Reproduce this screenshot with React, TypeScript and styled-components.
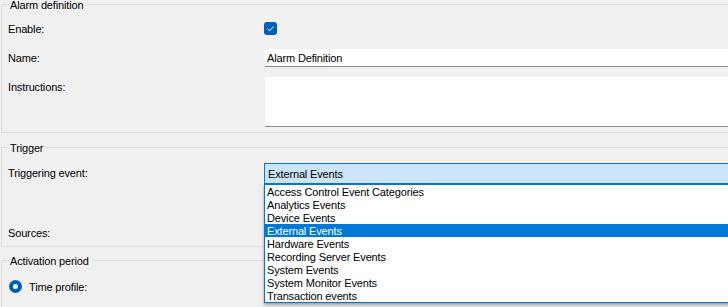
import React from "react";
import styled, { createGlobalStyle } from "styled-components";

const GlobalStyle = createGlobalStyle`
  html, body {
    margin: 0;
    padding: 0;
    background: #f0f0f0;
    overflow: hidden;
  }
  body {
    font-family: "Liberation Sans", Arial, sans-serif;
    font-size: 11px;
    letter-spacing: -0.15px;
    color: #000;
  }
`;

const Page = styled.div`
  width: 780px;
  height: 320px;
  padding-left: 1px;
  margin-top: -2px;
  display: flex;
  flex-direction: column;
`;

const Group = styled.section<{ $mt: number }>`
  margin-top: ${(p) => p.$mt}px;
  display: flex;
  flex-direction: column;
`;

const GroupHeader = styled.div`
  display: flex;
  height: 13px;
`;

const HeaderCorner = styled.span`
  align-self: flex-end;
  width: 5px;
  height: 6px;
  border-top: 1px solid #dcdcdc;
  border-left: 1px solid #dcdcdc;
`;

const HeaderTitle = styled.span`
  padding: 1px 3px 0 3px;
  line-height: 12px;
  white-space: nowrap;
`;

const HeaderRule = styled.span`
  flex: 1;
  align-self: flex-start;
  margin-top: 6px;
  height: 1px;
  background: #dcdcdc;
`;

const GroupBody = styled.div<{ $pt: number; $pb: number }>`
  border-left: 1px solid #dcdcdc;
  border-bottom: 1px solid #dcdcdc;
  padding: ${(p) => p.$pt}px 0 ${(p) => p.$pb}px 6px;
  display: flex;
  flex-direction: column;
`;

const Row = styled.div<{ $mt?: number; $top?: boolean }>`
  display: grid;
  grid-template-columns: 256px 1fr;
  align-items: ${(p) => (p.$top ? "start" : "center")};
  margin-top: ${(p) => p.$mt ?? 0}px;
`;

const Label = styled.span<{ $pt?: number }>`
  height: 13px;
  box-sizing: border-box;
  line-height: ${(p) => 13 - Math.min(p.$pt ?? 0, 1)}px;
  padding-top: ${(p) => p.$pt ?? 0}px;
  white-space: nowrap;
`;

const CheckBox = styled.span`
  width: 13px;
  height: 13px;
  border-radius: 3px;
  background: #005fb8;
  display: flex;
  align-items: center;
  justify-content: center;
`;

const TextBox = styled.div<{ $h: number }>`
  margin-left: 1px;
  height: ${(p) => p.$h}px;
  box-sizing: border-box;
  background: #fff;
  border-bottom: 1px solid #8a8a8a;
  padding: 3px 0 0 2px;
  line-height: 13px;
  white-space: nowrap;
`;

const ComboWrap = styled.div`
  position: relative;
`;

const Combo = styled.div`
  height: 21px;
  box-sizing: border-box;
  border: 1px solid #0078d7;
  background: #cce4f7;
  padding: 1px 0 0 3px;
  display: flex;
  align-items: center;
  white-space: nowrap;
`;

const DropList = styled.ul`
  position: absolute;
  top: 100%;
  left: 0;
  right: 0;
  margin: 0;
  padding: 0;
  list-style: none;
  background: #fff;
  border: 1px solid #0078d7;
  box-shadow: 0 2px 3px rgba(0, 0, 0, 0.35);
  z-index: 2;
`;

const DropItem = styled.li<{ $selected?: boolean }>`
  height: 12px;
  line-height: 13px;
  padding: 1px 0 0 2px;
  white-space: nowrap;
  background: ${(p) => (p.$selected ? "#0078d7" : "transparent")};
  color: ${(p) => (p.$selected ? "#fff" : "#000")};
`;

const RadioRow = styled.div<{ $mt?: number }>`
  display: flex;
  align-items: center;
  gap: 7px;
  margin-left: 1px;
  margin-top: ${(p) => p.$mt ?? 0}px;
`;

const Radio = styled.span`
  width: 13px;
  height: 13px;
  box-sizing: border-box;
  border-radius: 50%;
  background: #005fb8;
  display: flex;
  align-items: center;
  justify-content: center;
`;

const RadioDot = styled.span`
  width: 5px;
  height: 5px;
  border-radius: 50%;
  background: #fff;
`;

const events = [
  "Access Control Event Categories",
  "Analytics Events",
  "Device Events",
  "External Events",
  "Hardware Events",
  "Recording Server Events",
  "System Events",
  "System Monitor Events",
  "Transaction events",
];

function GroupTitle({ title }: { title: string }) {
  return (
    <GroupHeader>
      <HeaderCorner />
      <HeaderTitle>{title}</HeaderTitle>
      <HeaderRule />
    </GroupHeader>
  );
}

export default function App() {
  return (
    <>
      <GlobalStyle />
      <Page>
        <Group $mt={0}>
          <GroupTitle title="Alarm definition" />
          <GroupBody $pt={11} $pb={5}>
            <Row>
              <Label $pt={1}>Enable:</Label>
              <CheckBox>
                <svg width="9" height="9" viewBox="0 0 9 9">
                  <path
                    d="M1.5 4.8 L3.6 6.8 L7.6 2.4"
                    fill="none"
                    stroke="#fff"
                    strokeWidth="1"
                  />
                </svg>
              </CheckBox>
            </Row>
            <Row $mt={14}>
              <Label>Name:</Label>
              <TextBox $h={18}>Alarm Definition</TextBox>
            </Row>
            <Row $mt={10} $top>
              <Label $pt={4}>Instructions:</Label>
              <TextBox $h={50} />
            </Row>
          </GroupBody>
        </Group>

        <Group $mt={8}>
          <GroupTitle title="Trigger" />
          <GroupBody $pt={9} $pb={6}>
            <Row>
              <Label>Triggering event:</Label>
              <ComboWrap>
                <Combo>External Events</Combo>
                <DropList>
                  {events.map((e) => (
                    <DropItem key={e} $selected={e === "External Events"}>
                      {e}
                    </DropItem>
                  ))}
                </DropList>
              </ComboWrap>
            </Row>
            <Row $mt={43}>
              <Label>Sources:</Label>
            </Row>
          </GroupBody>
        </Group>

        <Group $mt={7}>
          <GroupTitle title="Activation period" />
          <GroupBody $pt={13} $pb={20}>
            <RadioRow>
              <Radio>
                <RadioDot />
              </Radio>
              <Label $pt={1}>Time profile:</Label>
            </RadioRow>
          </GroupBody>
        </Group>
      </Page>
    </>
  );
}
